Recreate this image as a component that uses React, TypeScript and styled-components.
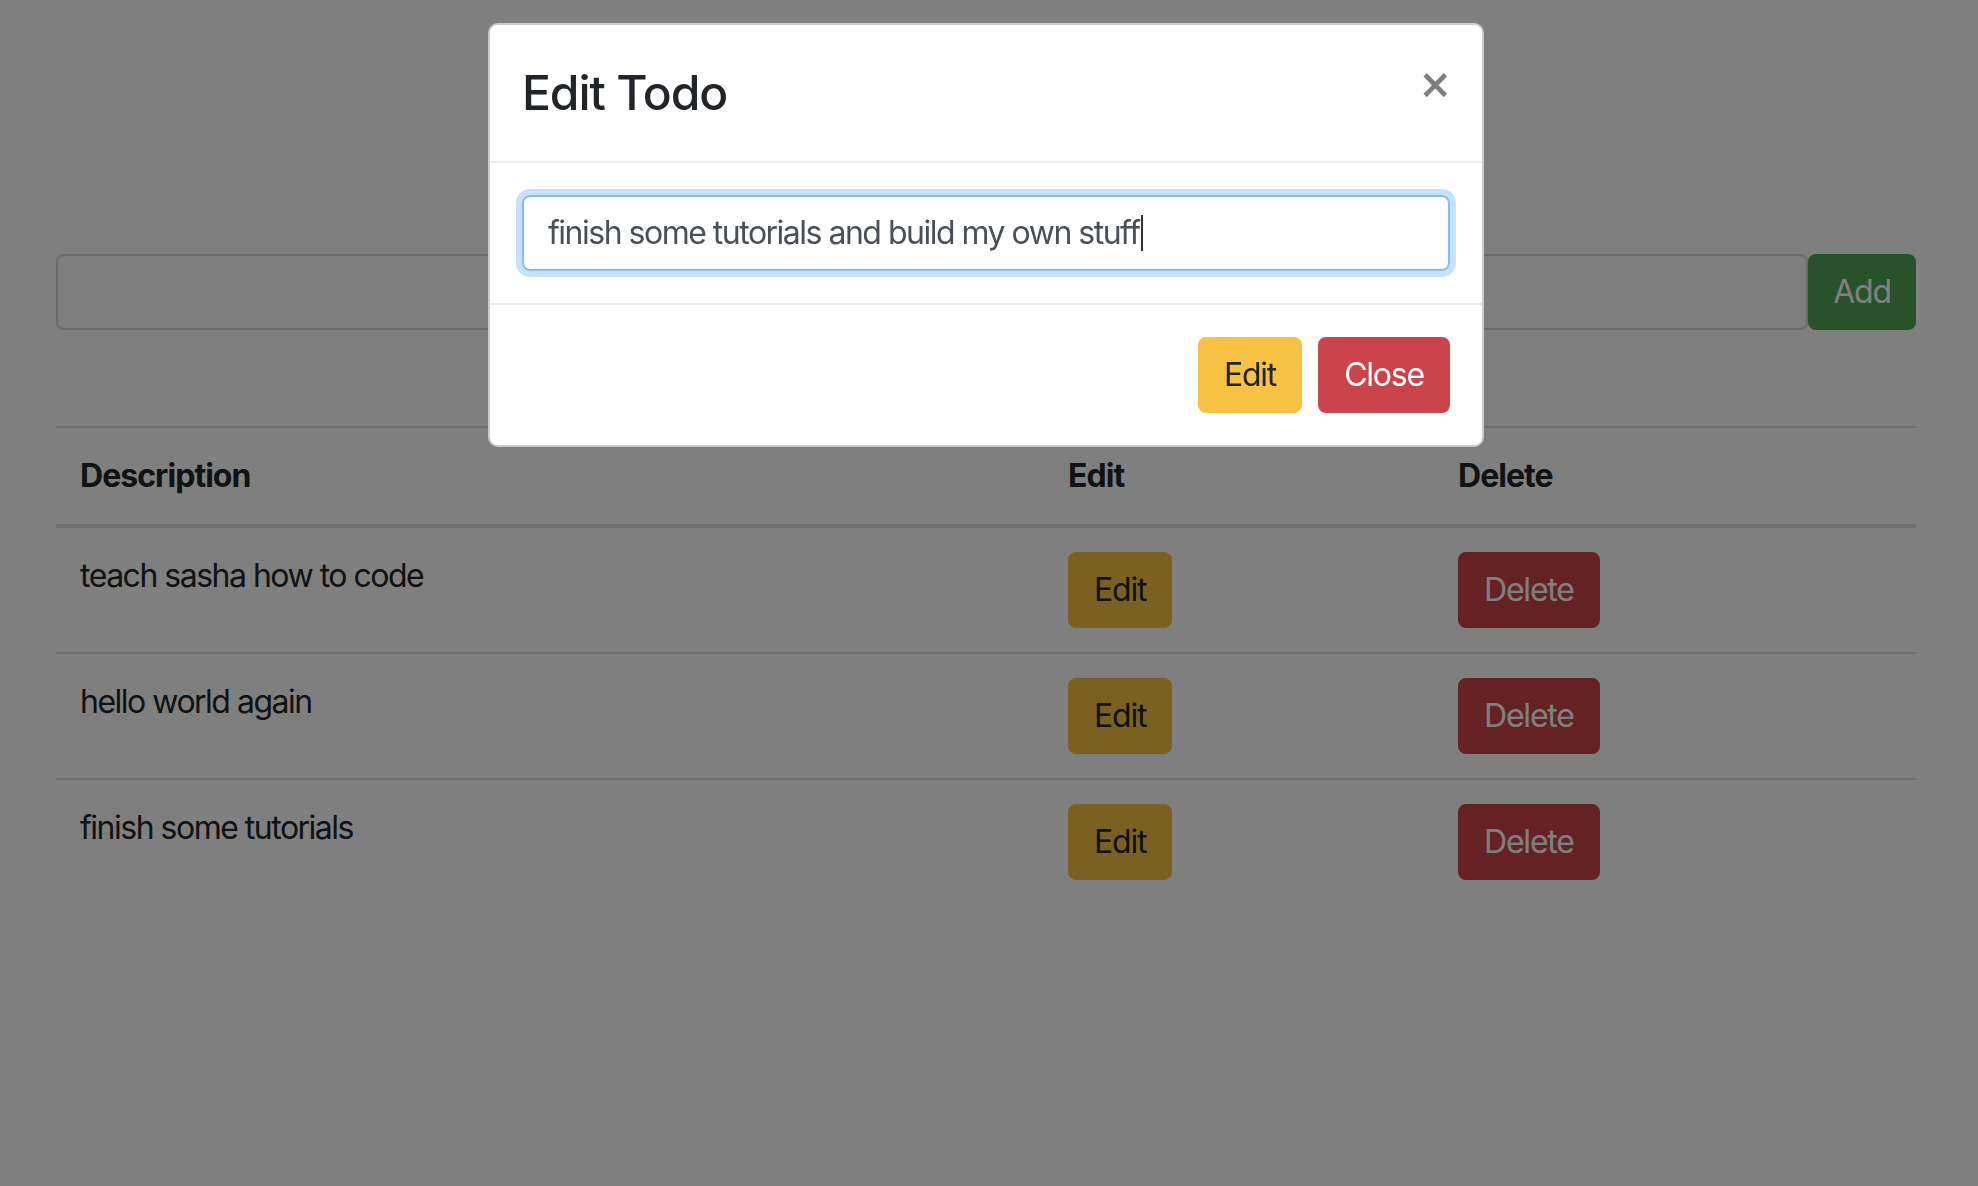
import React from "react";
import styled, { createGlobalStyle, css } from "styled-components";

const GlobalStyle = createGlobalStyle`
  html, body {
    margin: 0;
    padding: 0;
    background: #ffffff;
    height: 1186px;
    overflow: hidden;
  }
  body {
    font-family: Inter, "Noto Sans", "Liberation Sans", sans-serif;
    color: #212529;
    font-size: 32px;
    line-height: 48px;
  }
  * { box-sizing: border-box; }
`;

type Variant = "warning" | "danger" | "success";

const variantColors: Record<Variant, { bg: string; fg: string }> = {
  warning: { bg: "#f7c243", fg: "#212529" },
  danger: { bg: "#ca444b", fg: "#ffffff" },
  success: { bg: "#50a454", fg: "#ffffff" },
};

const Button = styled.button<{ $variant: Variant }>`
  display: inline-block;
  font-family: inherit;
  font-size: 32px;
  line-height: 48px;
  font-weight: 400;
  padding: 12px 24px;
  border: 2px solid transparent;
  border-radius: 8px;
  cursor: pointer;
  letter-spacing: -1.2px;
  ${({ $variant }) => css`
    background: ${variantColors[$variant].bg};
    border-color: ${variantColors[$variant].bg};
    color: ${variantColors[$variant].fg};
  `}
`;

const Page = styled.main`
  width: 1860px;
  margin-left: 56px;
  padding-top: 254px;
`;

const AddForm = styled.form`
  display: flex;
  align-items: stretch;
  margin: 0;
`;

const TextField = styled.input`
  flex: 1;
  height: 76px;
  margin: 0;
  padding: 12px 24px;
  font-family: inherit;
  font-size: 32px;
  color: #495057;
  background: #ffffff;
  border: 2px solid #d0d5db;
  border-radius: 8px;
  outline: none;
`;

const AddButton = styled(Button)`
  width: 108px;
  padding-left: 0;
  padding-right: 0;
  text-align: center;
`;

const Table = styled.table`
  width: 100%;
  margin-top: 96px;
  border-collapse: collapse;
  table-layout: fixed;
  color: #212529;
`;

const HeadCell = styled.th<{ $width: number }>`
  width: ${({ $width }) => $width}px;
  text-align: left;
  font-weight: 700;
  padding: 24px 24px;
  line-height: 48px;
  vertical-align: bottom;
  border-top: 2px solid #dee2e6;
  border-bottom: 4px solid #dee2e6;
  letter-spacing: -0.95px;
`;

const Cell = styled.td`
  padding: 24px 24px;
  line-height: 48px;
  vertical-align: top;
  border-top: 2px solid #dee2e6;
  letter-spacing: -1.5px;
`;

const Backdrop = styled.div`
  position: fixed;
  inset: 0;
  background: rgba(0, 0, 0, 0.5);
  z-index: 10;
`;

const ModalLayer = styled.div`
  position: fixed;
  inset: 0;
  z-index: 20;
`;

const Dialog = styled.div`
  width: 996px;
  margin: 23px 0 0 488px;
  background: #ffffff;
  border: 2px solid rgba(0, 0, 0, 0.2);
  border-radius: 10px;
  display: flex;
  flex-direction: column;
`;

const Header = styled.div`
  display: flex;
  align-items: flex-start;
  padding: 32px;
  border-bottom: 2px solid #e9ecef;
`;

const Title = styled.h4`
  margin: 0;
  font-size: 48px;
  line-height: 72px;
  font-weight: 500;
  color: #212529;
  letter-spacing: -1.1px;
`;

const CloseX = styled.button`
  margin: -32px -32px -32px auto;
  padding: 35px 30px 32px 36px;
  background: transparent;
  border: 0;
  font-family: "DejaVu Sans", sans-serif;
  font-size: 40px;
  line-height: 48px;
  font-weight: 700;
  color: #000;
  opacity: 0.5;
  cursor: pointer;
`;

const Body = styled.div`
  padding: 32px;
`;

const FieldBox = styled.div`
  display: flex;
  align-items: center;
  height: 76px;
  padding: 12px 24px;
  font-size: 32px;
  color: #495057;
  border: 2px solid #80bdff;
  border-radius: 8px;
  box-shadow: 0 0 0 6px rgba(0, 123, 255, 0.22);
  letter-spacing: -1.5px;
`;

const Caret = styled.span`
  display: inline-block;
  width: 2px;
  height: 36px;
  margin-left: 1px;
  background: #333;
`;

const Footer = styled.div`
  display: flex;
  justify-content: flex-end;
  align-items: center;
  padding: 24px;
  border-top: 2px solid #e9ecef;
`;

const FooterInner = styled.div`
  display: flex;
  gap: 16px;
  margin: 8px;
`;

const todos = [
  "teach sasha how to code",
  "hello world again",
  "finish some tutorials",
];

export default function App() {
  return (
    <>
      <GlobalStyle />
      <Page>
        <AddForm onSubmit={(e) => e.preventDefault()}>
          <TextField type="text" defaultValue="" />
          <AddButton $variant="success" type="submit">
            Add
          </AddButton>
        </AddForm>
        <Table>
          <thead>
            <tr>
              <HeadCell $width={988}>Description</HeadCell>
              <HeadCell $width={390}>Edit</HeadCell>
              <HeadCell $width={482}>Delete</HeadCell>
            </tr>
          </thead>
          <tbody>
            {todos.map((t) => (
              <tr key={t}>
                <Cell>{t}</Cell>
                <Cell>
                  <Button $variant="warning" type="button">
                    Edit
                  </Button>
                </Cell>
                <Cell>
                  <Button $variant="danger" type="button">
                    Delete
                  </Button>
                </Cell>
              </tr>
            ))}
          </tbody>
        </Table>
      </Page>
      <Backdrop />
      <ModalLayer>
        <Dialog role="dialog">
          <Header>
            <Title>Edit Todo</Title>
            <CloseX type="button" aria-label="Close">
              ×
            </CloseX>
          </Header>
          <Body>
            <FieldBox>
              finish some tutorials and build my own stuff
              <Caret />
            </FieldBox>
          </Body>
          <Footer>
            <FooterInner>
              <Button $variant="warning" type="button">
                Edit
              </Button>
              <Button $variant="danger" type="button">
                Close
              </Button>
            </FooterInner>
          </Footer>
        </Dialog>
      </ModalLayer>
    </>
  );
}
